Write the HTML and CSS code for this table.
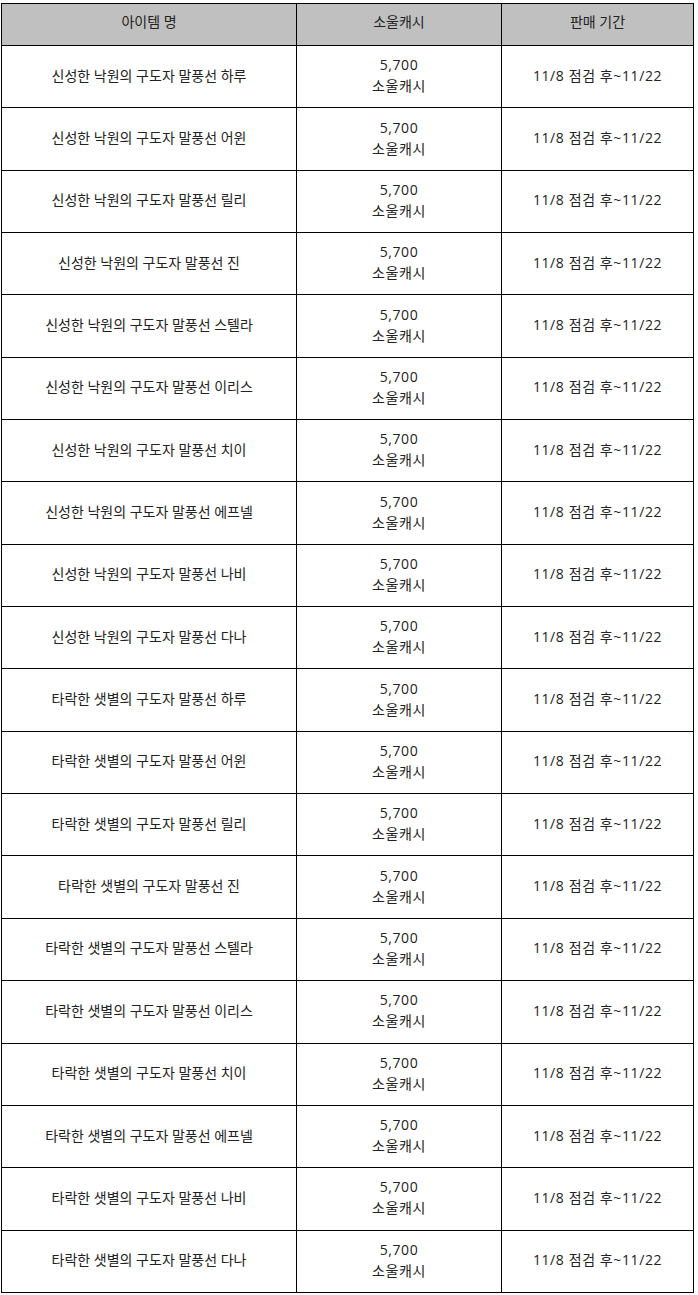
FILE: index.html
```html
<!DOCTYPE html>
<html lang="ko">
<head>
<meta charset="utf-8">
<link rel="stylesheet" href="styles.css">
</head>
<body>
<table class="items">
<thead>
<tr><th class="c1">아이템 명</th><th class="c2">소울캐시</th><th class="c3">판매 기간</th></tr>
</thead>
<tbody>
<tr><td>신성한 낙원의 구도자 말풍선 하루</td><td>5,700<br>소울캐시</td><td>11/8 점검 후~11/22</td></tr>
<tr><td>신성한 낙원의 구도자 말풍선 어윈</td><td>5,700<br>소울캐시</td><td>11/8 점검 후~11/22</td></tr>
<tr><td>신성한 낙원의 구도자 말풍선 릴리</td><td>5,700<br>소울캐시</td><td>11/8 점검 후~11/22</td></tr>
<tr><td>신성한 낙원의 구도자 말풍선 진</td><td>5,700<br>소울캐시</td><td>11/8 점검 후~11/22</td></tr>
<tr><td>신성한 낙원의 구도자 말풍선 스텔라</td><td>5,700<br>소울캐시</td><td>11/8 점검 후~11/22</td></tr>
<tr><td>신성한 낙원의 구도자 말풍선 이리스</td><td>5,700<br>소울캐시</td><td>11/8 점검 후~11/22</td></tr>
<tr><td>신성한 낙원의 구도자 말풍선 치이</td><td>5,700<br>소울캐시</td><td>11/8 점검 후~11/22</td></tr>
<tr><td>신성한 낙원의 구도자 말풍선 에프넬</td><td>5,700<br>소울캐시</td><td>11/8 점검 후~11/22</td></tr>
<tr><td>신성한 낙원의 구도자 말풍선 나비</td><td>5,700<br>소울캐시</td><td>11/8 점검 후~11/22</td></tr>
<tr><td>신성한 낙원의 구도자 말풍선 다나</td><td>5,700<br>소울캐시</td><td>11/8 점검 후~11/22</td></tr>
<tr><td>타락한 샛별의 구도자 말풍선 하루</td><td>5,700<br>소울캐시</td><td>11/8 점검 후~11/22</td></tr>
<tr><td>타락한 샛별의 구도자 말풍선 어윈</td><td>5,700<br>소울캐시</td><td>11/8 점검 후~11/22</td></tr>
<tr><td>타락한 샛별의 구도자 말풍선 릴리</td><td>5,700<br>소울캐시</td><td>11/8 점검 후~11/22</td></tr>
<tr><td>타락한 샛별의 구도자 말풍선 진</td><td>5,700<br>소울캐시</td><td>11/8 점검 후~11/22</td></tr>
<tr><td>타락한 샛별의 구도자 말풍선 스텔라</td><td>5,700<br>소울캐시</td><td>11/8 점검 후~11/22</td></tr>
<tr><td>타락한 샛별의 구도자 말풍선 이리스</td><td>5,700<br>소울캐시</td><td>11/8 점검 후~11/22</td></tr>
<tr><td>타락한 샛별의 구도자 말풍선 치이</td><td>5,700<br>소울캐시</td><td>11/8 점검 후~11/22</td></tr>
<tr><td>타락한 샛별의 구도자 말풍선 에프넬</td><td>5,700<br>소울캐시</td><td>11/8 점검 후~11/22</td></tr>
<tr><td>타락한 샛별의 구도자 말풍선 나비</td><td>5,700<br>소울캐시</td><td>11/8 점검 후~11/22</td></tr>
<tr><td>타락한 샛별의 구도자 말풍선 다나</td><td>5,700<br>소울캐시</td><td>11/8 점검 후~11/22</td></tr>
</tbody>
</table>
</body>
</html>
```
FILE: styles.css
```css
html, body {
  margin: 0;
  padding: 0;
  background: #fff;
}
body {
  padding: 3px 0 0 1px;
  font-family: "Open Sans", "Noto Sans CJK KR", "Noto Sans", sans-serif;
  font-size: 14px;
  color: #222;
}
.items {
  border-collapse: collapse;
  width: 693px;
  table-layout: fixed;
}
.items th, .items td {
  border: 1px solid #000;
  text-align: center;
  vertical-align: middle;
  padding: 0;
  line-height: 21px;
}
.items th {
  background: #c0c0c0;
  height: 35px;
  font-weight: normal;
  padding-bottom: 6px;
}
.items td {
  height: 58.35px;
  padding-bottom: 3px;
}
.items td + td {
  letter-spacing: 0.6px;
}
.c1 { width: 294px; }
.c2 { width: 204px; }
.c3 { width: auto; }
```
